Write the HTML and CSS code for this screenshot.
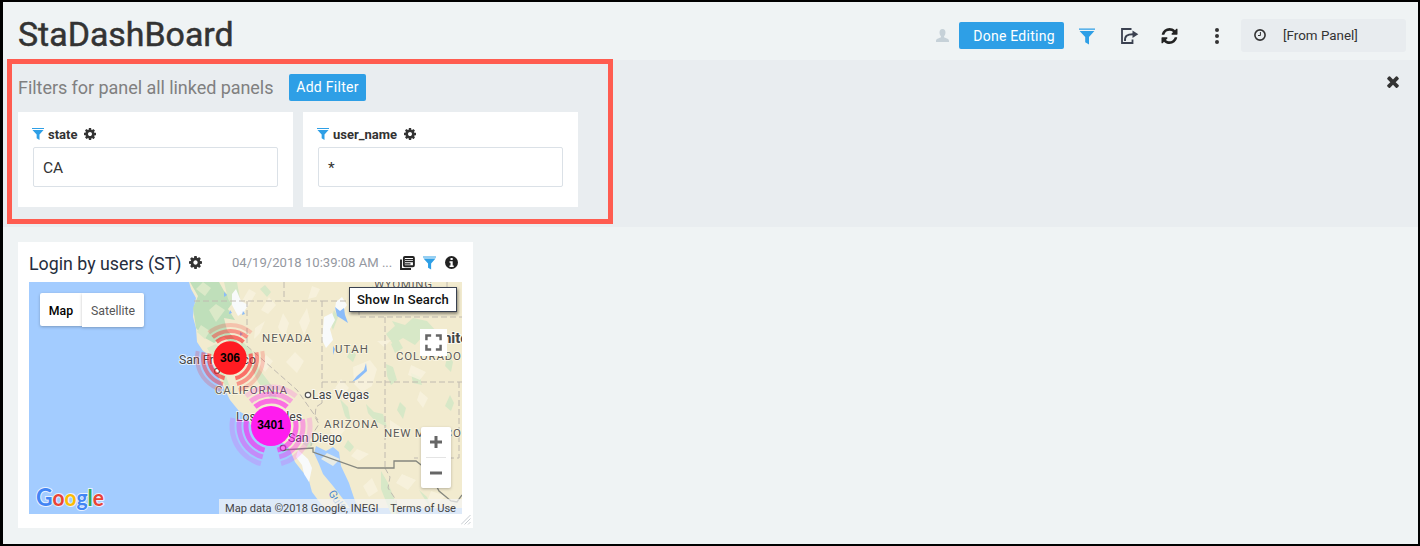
FILE: index.html
```html
<!DOCTYPE html>
<html lang="en">
<head>
<meta charset="utf-8">
<title>StaDashBoard</title>
<link rel="stylesheet" href="styles.css">
</head>
<body>
<svg class="defs" aria-hidden="true">
  <symbol id="gear" viewBox="128 128 1536 1536"><path d="M1152 896q0-106-75-181t-181-75-181 75-75 181 75 181 181 75 181-75 75-181zm512-109v222q0 12-8 23t-20 13l-185 28q-19 54-39 91 35 50 107 138 10 12 10 25t-9 23q-27 37-99 108t-94 71q-12 0-26-9l-138-108q-44 23-91 38-16 136-29 186-7 28-36 28h-222q-14 0-24.500-8.500t-11.500-21.500l-28-184q-49-16-90-37l-141 107q-10 9-25 9-14 0-25-11-126-114-165-168-7-10-7-23 0-12 8-23 15-21 51-66.500t54-70.500q-27-50-41-99l-183-27q-13-2-21-12.500t-8-23.500v-222q0-12 8-23t19-13l186-28q14-46 39-92-40-57-107-138-10-12-10-24 0-10 9-23 26-36 98.500-107.500t94.500-71.500q13 0 26 10l138 107q44-23 91-38 16-136 29-186 7-28 36-28h222q14 0 24.500 8.500t11.500 21.500l28 184q49 16 90 37l142-107q9-9 24-9 13 0 25 10 129 119 165 170 7 8 7 22 0 12-8 23-15 21-51 66.500t-54 70.500q26 50 41 98l183 28q13 2 21 12.500t8 23.500z"/></symbol>
  <symbol id="funnel" viewBox="0 0 16 16"><path d="M0 0h16v1.300H0zM.6 2.500h14.800L10 8.600V16L6.200 13.700V8.600z"/></symbol>
</svg>
<div class="app">
  <header class="header">
    <h1 class="title">StaDashBoard</h1>
    <div class="tools">
      <svg class="user" viewBox="0 0 14 14"><path d="M7 0c2.200 0 3.200 1.600 3.200 3.700 0 1.700-.7 3.200-1.500 4v1.100c.6 1 5.300 1 5.300 4V14H0v-1.200c0-3 4.700-3 5.300-4V7.700c-.8-.8-1.500-2.300-1.500-4C3.800 1.600 4.800 0 7 0z"/></svg>
      <button class="btn done">Done Editing</button>
      <svg class="blue tool-funnel"><use href="#funnel"/></svg>
      <svg class="share" viewBox="0 0 18 16"><path d="M10.500 1H1v14h10.500v-3.500" fill="none" stroke="#3b4150" stroke-width="1.800"/><path d="M4 13C3.600 8 6 6.200 12 6.200" fill="none" stroke="#3b4150" stroke-width="1.900"/><path d="M11.500 2.500l5.800 3.700-5.800 3.700z" fill="#3b4150"/></svg>
      <svg class="refresh" viewBox="128 128 1536 1536"><path d="M1639 1056q0 5-1 7-64 268-268 434.500t-478 166.500q-146 0-282.500-55t-243.500-157l-129 129q-19 19-45 19t-45-19-19-45v-448q0-26 19-45t45-19h448q26 0 45 19t19 45-19 45l-137 137q71 66 161 102t187 36q134 0 250-65t186-179q11-17 53-117 8-23 30-23h192q13 0 22.500 9.500t9.500 22.500zm25-800v448q0 26-19 45t-45 19h-448q-26 0-45-19t-19-45 19-45l138-138q-148-137-349-137-134 0-250 65t-186 179q-11 17-53 117-8 23-30 23h-199q-13 0-22.500-9.500t-9.500-22.500v-7q65-268 270-434.500t480-166.500q146 0 284 55.500t245 156.500l130-129q19-19 45-19t45 19 19 45z"/></svg>
      <svg class="dots" viewBox="0 0 4 16"><circle cx="2" cy="2" r="2"/><circle cx="2" cy="8" r="2"/><circle cx="2" cy="14" r="2"/></svg>
      <div class="range">
        <svg class="clock" viewBox="0 0 12 12"><circle cx="6" cy="6" r="5.100" fill="none" stroke="#333" stroke-width="1.600"/><path d="M6.400 3v3.500H4" fill="none" stroke="#333"/></svg>
        <span>[From Panel]</span>
      </div>
    </div>
  </header>

  <section class="filters">
    <div class="filters-head">
      <span class="filters-title">Filters for panel all linked panels</span>
      <button class="btn add">Add Filter</button>
      <svg class="close" viewBox="302 238 1188 1316"><path d="M1490 1322q0 40-28 68l-136 136q-28 28-68 28t-68-28l-294-294-294 294q-28 28-68 28t-68-28l-136-136q-28-28-28-68t28-68l294-294-294-294q-28-28-28-68t28-68l136-136q28-28 68-28t68 28l294 294 294-294q28-28 68-28t68 28l136 136q28 28 28 68t-28 68l-294 294 294 294q28 28 28 68z"/></svg>
    </div>
    <div class="cards">
      <div class="card">
        <div class="label"><svg class="blue"><use href="#funnel"/></svg><span>state</span><svg><use href="#gear"/></svg></div>
        <div class="field">CA</div>
      </div>
      <div class="card">
        <div class="label"><svg class="blue"><use href="#funnel"/></svg><span>user_name</span><svg><use href="#gear"/></svg></div>
        <div class="field">*</div>
      </div>
    </div>
  </section>

  <main class="board">
    <article class="panel">
      <div class="panel-head">
        <h2 class="panel-title">Login by users (ST)</h2>
        <svg class="panel-gear"><use href="#gear"/></svg>
        <span class="stamp">04/19/2018 10:39:08 AM ...</span>
        <svg class="copy" viewBox="0 0 15 14"><path d="M1 3.500V13h10" fill="none" stroke="#222" stroke-width="1.900"/><rect x="3.900" y="1" width="10" height="9.300" rx="1" fill="#fff" stroke="#222" stroke-width="1.900"/><path d="M5 3.600h8M5 5.700h8M5 7.800h5.500" stroke="#222" stroke-width="1.250"/></svg>
        <svg class="blue panel-funnel"><use href="#funnel"/></svg>
        <svg class="info" viewBox="0 0 13 13"><circle cx="6.500" cy="6.500" r="6.500" fill="#222"/><path d="M5.500 2h2.200v2H5.500zM4.500 5.200h3.200v4.300h1V11H4.500V9.500h1V6.700h-1z" fill="#fff"/></svg>
      </div>
      <div class="map">
        <svg class="map-art" viewBox="29 282 433 232">
          <rect x="29" y="282" width="433" height="232" fill="#a3ccff"/>
          <path class="land" d="M189 282l2 7 5 9-2 9-1 10 3 11 1 14 6 9 5 3 5 10 3 8 7 14 7 14 9 11 8 5 5 12 11 4 12 8 10 4 5 6 5 12 7 9 6 6 4 15 6 8 6 8h26l-7-9-10-13-10-12-4-10-5-11 2-7 10 5 7-4 6 5 2 14 8 17 5 15 4 10H462V282z"/>
          <path fill="#bfdfba" d="M190 282h29l5 9 10 10-6 8 7 11-11-2 3 12 12 14-6 1-9-8-10 6-9-5-9-10-3-20 5-12z"/>
          <path fill="#dbe9c8" d="M203 282l8 6-6 8-9-7zM216 304l9 6-9 12-7-12zM201 325l9 6-5 8-8-7zM207 348l9-4 11 13-6 14z"/>
          <path fill="#d5e7c5" d="M224 282h13l3 17-5 10-7-10zM241 340l11 11 7 18 13 17 6 15-8-3-12-16-8-17-10-14zM219 370l7 6 7 20-6-5zM252 415l12 4-5 8-9-4zM274 409l8 8-4 7-8-7z"/>
          <path fill="#f3ecd0" d="M228 343l7 3 6 18 15 22 13 22-5 3-15-18-17-20-8-20z"/>
          <g fill="#d7e8c7">
            <path d="M265 285l6 7-4 5-7-8zM392 321l13 4 8-7 14 3 9 10-3 8-10-3-8 9-12-7-10 6-7-10 9-8zM386 364l7 3 4 13-6 5-4-9zM411 373l9 4 2 8-9-2zM398 339l5 9-8 5-4-9zM340 399l8 8 3 16-6-7zM366 404l8 8 9 2 4 13-12-6-7-8zM400 402l6 6-3 11-6-9zM348 440l6 7-4 5-6-5zM381 471l7 12 6 15 4 16h-7l-10-25zM419 490l8 7 7 17zM448 354l5 8-2 10-6-6zM450 395l4 8-3 8-6-5zM334 310l4 7-5 13-3-7zM372 285l7 7 2 8-8-4zM352 348l4 7-3 7-6-5zM306 439l8 4-5 5-6-4z"/>
          </g>
          <g fill="#f8f3df" opacity=".8">
            <path d="M249 289l7 4-7 12-7 8-3-7zM269 297l7 8-8 9-7-4zM283 313l6 10-5 17-6-13zM299 322l8-14 3 13-6 14zM255 328l10-7-5 12-6 6zM312 286l8 3-4 8-8 2zM266 355l7 6-8 11-6-8zM286 362l9-10 9 9-7 12zM353 367l17-7 7 9-5 17-10 6-8-8zM391 340l-7 7-7-6zM341 379l8 9-6 6-8-6zM411 365l15 7-6 8-12-5zM335 422l10 8-8 9-7-8zM390 420l15 10-4 7-11-3zM420 391l8 7-5 10-6-8zM357 449l12 5-10 7-8-5zM327 453l13 6-7 7-12-7zM372 478l6 13-9 6-6-11zM402 474l14 6-8 10-12-7zM431 491l15 5-9 8-9-5z"/>
          </g>
          <path fill="#f8fafb" d="M324 317l8-4 3 7-5 9 3 11-7 8-4-8zM336 302l6-5 5 8-5 7-7-3zM232 294l4-5 5 12 7 4-4 7-6 4-6-11zM298 450l10 9 4 9-3 14-5-8-2-9-6-8z"/>
          <g fill="#8bbcf9">
            <path d="M335 307l5 4 4-3 1 7 3 8-6-4-5-3zM352 382l5-6 7-6 2-7 1 8-9 8zM224 292l3 3-3 2zM243 311l2 3-3 1zM230 310l2 3-3 1zM240 332l3 2-3 2zM333 346l2 3-2 6zM289 433l3 3-3 1z"/>
          </g>
          <path class="border" d="M194 301h128M284 282v19M247 301v45l50 44 21 30M322 301v102M322 301h37v16h103M385 317v151M322 382h140M447 282v10M459 382v76h-45M322 403l-6 4-1 10 4 7-7 11-1 11M385 468l5 9-2 11 8 12 1 14"/>
          <path d="M282 450l31-2v4l45 16h36v-7h22l9 7 6 7 8 16 12 10 6 1 5-7" fill="none" stroke="#85877f" stroke-width="1.300"/>
          <g class="state">
            <text x="262" y="342" textLength="49">NEVADA</text>
            <text x="335" y="353" textLength="33">UTAH</text>
            <text x="396" y="360" textLength="65">COLORADO</text>
            <text x="215" y="394" textLength="72">CALIFORNIA</text>
            <text x="324" y="428" textLength="54">ARIZONA</text>
            <text x="384" y="437" textLength="77">NEW MEXICO</text>
            <text x="374" y="288" textLength="58">WYOMING</text>
          </g>
          <g class="city">
            <text x="179" y="364" textLength="77">San Francisco</text>
            <text x="312" y="399" textLength="57">Las Vegas</text>
            <text x="236" y="421" textLength="66">Los Angeles</text>
            <text x="288" y="442" textLength="54">San Diego</text>
            <text class="country" x="433" y="343">United States</text>
          </g>
          <text x="328" y="493" class="gulf" transform="rotate(58 328 493)">Gulf</text>
          <g fill="#fff" stroke="#555" stroke-width="1.200"><circle cx="308" cy="395" r="2.700"/><circle cx="217" cy="371" r="2.500"/><circle cx="283" cy="448" r="2.700"/></g>
          <g class="arcs red">
            <circle cx="230" cy="358" r="21" pathLength="360" transform="rotate(-12 230 358)" opacity=".6"/>
            <circle cx="230" cy="358" r="27" pathLength="360" transform="rotate(-12 230 358)" opacity=".42"/>
            <circle cx="230" cy="358" r="33" pathLength="360" transform="rotate(-12 230 358)" opacity=".2"/>
          </g>
          <circle cx="230" cy="358" r="16.700" fill="#ff1c22"/>
          <g class="arcs pink">
            <circle cx="271" cy="426" r="25" pathLength="360" transform="rotate(-12 271 426)" opacity=".6"/>
            <circle cx="271" cy="426" r="32" pathLength="360" transform="rotate(-12 271 426)" opacity=".36"/>
            <circle cx="271" cy="426" r="39" pathLength="360" transform="rotate(-12 271 426)" opacity=".17"/>
          </g>
          <circle cx="271" cy="426" r="20" fill="#ff1cee"/>
          <g class="count"><text x="230" y="362">306</text><text x="270.500" y="429">3401</text></g>
          <text class="google" x="36" y="506" textLength="68" lengthAdjust="spacingAndGlyphs"><tspan fill="#4285f4" font-size="24">G</tspan><tspan fill="#ea4335">o</tspan><tspan fill="#fbbc05">o</tspan><tspan fill="#4285f4">g</tspan><tspan fill="#34a853">l</tspan><tspan fill="#ea4335">e</tspan></text>
        </svg>
        <div class="types"><span class="type on">Map</span><span class="type">Satellite</span></div>
        <button class="search">Show In Search</button>
        <div class="full"><svg viewBox="0 0 18 18"><path d="M1.500 6.500v-5h5M11.500 1.500h5v5M16.500 11.500v5h-5M6.500 16.500h-5v-5" fill="none" stroke="#666" stroke-width="2.600"/></svg></div>
        <div class="zoom">
          <svg viewBox="0 0 12 12"><path d="M0 6h12M6 0v12" stroke="#666" stroke-width="3"/></svg>
          <i></i>
          <svg viewBox="0 0 12 12"><path d="M0 6h12" stroke="#666" stroke-width="3"/></svg>
        </div>
        <div class="legal"><span>Map data ©2018 Google, INEGI</span><span>Terms of Use</span></div>
      </div>
      <svg class="grip" viewBox="0 0 10 10"><path d="M0 9.500L9.500 0M3.500 9.500l6-6M7 9.500L9.500 7" stroke="#c8cdd2" fill="none"/></svg>
    </article>
  </main>
  <div class="highlight"></div>
</div>
</body>
</html>
```

FILE: styles.css
```css
* { box-sizing: border-box; }
body { margin: 0; font-family: Roboto, "Liberation Sans", sans-serif; color: #333; }
svg { display: block; flex: none; overflow: hidden; }
.defs { position: absolute; width: 0; height: 0; }
button { font: inherit; border: 0; padding: 0; }
.app { position: relative; width: 1420px; height: 546px; border: solid #000; border-width: 2px 2px 2px 3px; background: #eff3f4; overflow: hidden; display: flex; flex-direction: column; }

.header { height: 58px; flex: none; display: flex; justify-content: space-between; padding: 0 12px 0 15px; }
.title { margin: 13px 0 0; font-size: 33.9px; line-height: 40px; font-weight: 400; -webkit-text-stroke: .5px #333; }
.tools { display: flex; align-items: center; padding-top: 9px; }
.user { width: 13px; height: 13px; fill: #c6d1d8; margin-right: 10px; }
.btn { background: #2e9fe6; color: #fff; border-radius: 2px; height: 27px; font-size: 14px; line-height: 27px; white-space: nowrap; }
.done { width: 105px; padding: 1px 0 0 5px; letter-spacing: .25px; }
.tool-funnel { width: 16px; height: 17px; margin: 1px 0 0 15px; }
.share { width: 18px; height: 16px; margin-left: 26px; }
.refresh { width: 17px; height: 16px; margin: 1px 0 0 22px; fill: #222; }
.dots { width: 4px; height: 16px; margin: 1px 0 0 37px; fill: #333; }
.range { width: 165px; height: 33px; margin-left: 22px; border-radius: 3px; background: #e8ecef; display: flex; align-items: center; gap: 17px; padding-left: 13px; font-size: 13.4px; }
.clock { width: 12px; height: 12px; margin-top: -2px; }

.filters { height: 167px; flex: none; background: #e9edf0; padding: 14px 18px 0 15px; }
.filters-head { display: flex; align-items: center; height: 27px; }
.filters-title { width: 271px; font-size: 18px; color: #808080; white-space: nowrap; letter-spacing: -.05px; }
.add { width: 77px; letter-spacing: .28px; }
.close { width: 12px; height: 13px; margin: -13px 1px 0 auto; fill: #333; }
.cards { display: flex; gap: 10px; margin-top: 11px; }
.card { width: 275px; height: 95px; background: #fff; padding: 15px; }
.label { display: flex; align-items: center; height: 15px; font-size: 13px; font-weight: 700; margin-bottom: 5px; }
.label svg { width: 12px; height: 12px; fill: #333; margin-top: -1px; }
.label svg + span { margin: 0 7px 0 4px; }
.label .blue { margin: -2px 0 0 -1px; }
.blue, .label .blue { fill: #2e9fe6; }
.field { height: 40px; border: 1px solid #dbe1e7; border-radius: 2px; padding: 0 9px; font-size: 15.5px; line-height: 40px; }

.board { padding: 15px; }
.panel { position: relative; width: 455px; height: 286px; background: #fff; padding: 0 11px; }
.panel-head { display: flex; align-items: center; height: 40px; }
.panel-title { margin: 3px 8px 0 0; width: 152px; font-size: 17.8px; font-weight: 400; color: #252d3d; white-space: nowrap; }
.panel-gear { width: 13px; height: 13px; fill: #333; margin-top: 1px; }
.stamp { width: 162px; margin-left: 30px; color: #9498a0; font-size: 13.1px; white-space: nowrap; }
.copy { width: 15px; height: 14px; margin: 2px 8px 0 6px; }
.panel-funnel { width: 13px; height: 14px; margin-top: 2px; }
.info { width: 13px; height: 13px; margin-left: 9px; }
.map { position: relative; width: 433px; height: 232px; overflow: hidden; }
.map-art { width: 433px; height: 232px; }
.land { fill: #f2ebcf; }
.border { fill: none; stroke: #c0bab0; stroke-width: 1; stroke-dasharray: 6 3; }
.state text { font-size: 11.5px; fill: #5c5b58; stroke: #fbf6e3; stroke-width: 1.5px; paint-order: stroke; }
.city text { font-size: 12.3px; fill: #444; stroke: #fff; stroke-opacity: .7; stroke-width: 2px; paint-order: stroke; }
.city .country { font-size: 15px; font-weight: 700; }
.gulf { font-size: 11px; fill: #4d8ad2; }
.arcs { fill: none; }
.arcs circle { stroke-dasharray: 87 30 87 38 80 38; }
.red { stroke: #ff1c22; stroke-width: 4; }
.pink { stroke: #ff1cee; stroke-width: 5; }
.count { font: 700 12px "Liberation Sans", Arial, sans-serif; text-anchor: middle; fill: #000; }
.google { font: 700 22px Lato, sans-serif; stroke: #e7f1ff; stroke-width: 2px; paint-order: stroke; }
.types { position: absolute; left: 11px; top: 11px; display: flex; align-items: flex-start; font-size: 12.3px; color: #565656; }
.type { width: 62px; height: 34px; line-height: 36px; text-align: center; background: #fff; border-radius: 0 2px 2px 0; box-shadow: 0 1px 3px rgba(0,0,0,.25); }
.type.on { width: 42px; height: 33px; color: #000; font-weight: 500; border-radius: 2px 0 0 2px; }
.search { position: absolute; left: 320px; top: 5px; width: 108px; height: 25px; border: 1px solid #394150; background: #fff; color: #111; font-size: 13px; font-weight: 500; letter-spacing: .15px; line-height: 24px; white-space: nowrap; box-shadow: 1px 2px 3px rgba(0,0,0,.45); }
.full { position: absolute; left: 391px; top: 47px; width: 27px; height: 27px; background: #fff; display: grid; place-items: center; }
.full svg { width: 17px; height: 17px; }
.zoom { position: absolute; left: 392px; top: 145px; width: 30px; height: 61px; background: #fff; border-radius: 2px; box-shadow: 0 1px 3px rgba(0,0,0,.25); display: flex; flex-direction: column; align-items: center; justify-content: space-between; padding: 9px 0; }
.zoom svg { width: 12px; height: 12px; }
.zoom i { width: 20px; height: 1px; background: #e4e4e4; }
.legal { position: absolute; left: 190px; bottom: 0; width: 243px; height: 15px; padding: 0 6px; display: flex; justify-content: space-between; background: rgba(245,245,245,.7); color: #444; font-size: 11.1px; line-height: 19px; white-space: nowrap; }
.grip { position: absolute; right: 2px; bottom: 3px; width: 10px; height: 10px; }
.highlight { position: absolute; left: 4px; top: 57px; width: 606px; height: 165px; border: 5px solid #ff5c50; }
```
